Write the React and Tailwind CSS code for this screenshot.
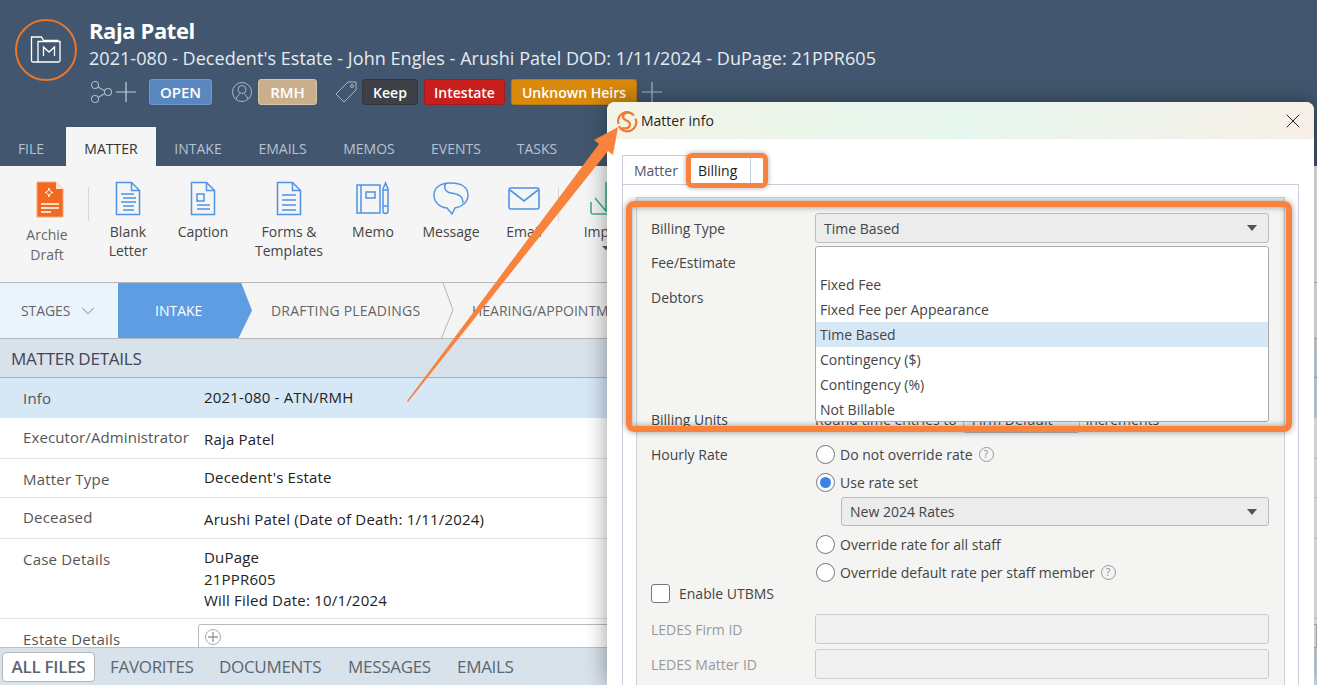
import { ChevronDown, X } from "lucide-react";

const Doc = ({ children }) => (
  <svg width="26" height="35" viewBox="0 0 26 35" fill="none" stroke="#4f94e3" strokeWidth="1.500">
    <path d="M1.500 1.500h15l8 8v24h-23z" />
    <path d="M16.500 1.500v8h8" />
    {children}
  </svg>
);

const Cross = ({ className, color }) => (
  <svg className={className} width="20" height="20" viewBox="0 0 20 20" stroke={color} strokeWidth="1.200"><path d="M10 0v20M0 10h20" /></svg>
);

const RibbonItem = ({ className, icon, label, label2 }) => (
  <div className={`flex flex-col items-center shrink-0 ${className}`}>
    <div className="h-[41px] flex items-start">{icon}</div>
    <div className="text-[14px] leading-[19px] text-[#444] text-center whitespace-nowrap">{label}<br />{label2}</div>
  </div>
);

const Row = ({ label, children, className, labelTop, valueTop }) => (
  <div className={`flex border-b border-[#e3e3e3] ${className}`}>
    <div className={`w-[204px] pl-[23px] text-[#555] shrink-0 whitespace-nowrap ${labelTop}`}>{label}</div>
    <div className={`text-[#222] leading-[21.5px] ${valueTop}`}>{children}</div>
  </div>
);

const Radio = ({ on, children, help }) => (
  <div className="flex items-center h-[28px] text-[#444]">
    <span className="w-[19px] h-[19px] ml-[1px] rounded-full border border-[#777] bg-white flex items-center justify-center shrink-0">
      {on && <span className="w-[11px] h-[11px] rounded-full bg-[#3b82e6]"></span>}
    </span>
    <span className="ml-[5px] whitespace-nowrap">{children}</span>
    {help && <span className="ml-[6px] w-[15px] h-[15px] rounded-full border border-[#999] text-[10px] leading-[13px] text-center text-[#888]">?</span>}
  </div>
);

const Caret = () => <span className="w-0 h-0 border-x-[5px] border-x-transparent border-t-[6px] border-t-[#555]"></span>;

const tabs = [
  ["FILE", "w-[66px] pr-[4px] text-[#b7c2cf]"],
  ["MATTER", "w-[90px] bg-[#f5f5f5] text-[#333]"],
  ["INTAKE", "w-[84px] text-[#b7c2cf]"],
  ["EMAILS", "w-[85px] text-[#b7c2cf]"],
  ["MEMOS", "w-[88px] text-[#b7c2cf]"],
  ["EVENTS", "w-[86px] text-[#b7c2cf]"],
  ["TASKS", "w-[76px] text-[#b7c2cf]"],
];

export default function App() {
  return (
    <div className="relative w-[1317px] h-[685px] overflow-hidden bg-white font-['Open_Sans',sans-serif] text-[14px]">
      {/* header */}
      <div className="h-[127px] bg-[#42576f] flex">
        <div className="ml-[15px] mt-[19px] w-[62px] h-[62px] rounded-full border-2 border-[#e8762b] flex items-center justify-center shrink-0">
          <svg width="32" height="30" viewBox="0 0 32 30" fill="none" stroke="#fff" strokeWidth="1.300">
            <path d="M8 27H3a1.500 1.500 0 0 1-1.500-1.500V2h10l2 3.500h15" />
            <path d="M8 27V6.500h22V25.500a1.500 1.500 0 0 1-1.500 1.500z" />
            <path d="M13.500 21v-9l5.500 5 5.500-5v9" />
          </svg>
        </div>
        <div className="ml-[12px] flex flex-col">
          <div className="mt-[15px] text-[22px] leading-[30px] font-bold text-white tracking-[-0.4px]">Raja Patel</div>
          <div className="text-[18px] leading-[26px] text-[#e6ebf0] whitespace-nowrap tracking-[0.05px]">2021-080 - Decedent's Estate - John Engles - Arushi Patel DOD: 1/11/2024 - DuPage: 21PPR605</div>
          <div className="mt-[8px] h-[26px] flex items-center text-white font-semibold text-[14px] whitespace-nowrap">
            <svg className="ml-[1px]" width="23" height="24" viewBox="0 0 23 24" fill="none" stroke="#a9b6c4" strokeWidth="1.100">
              <circle cx="5" cy="5" r="3.500" /><circle cx="5" cy="19" r="3.500" /><circle cx="18" cy="12" r="3.500" />
              <path d="M8 7l7 4M8 17.500l7-4" />
            </svg>
            <Cross className="ml-[3px]" color="#c6d0da" />
            <span className="ml-[13px] w-[63px] h-[26px] rounded-[3px] bg-[#5b87c0] border border-[#6f98cc] flex items-center justify-center text-[15px]">OPEN</span>
            <svg className="ml-[20px]" width="20" height="22" viewBox="0 0 20 22" fill="none" stroke="#a9b6c4" strokeWidth="1">
              <circle cx="10" cy="11" r="9.500" /><circle cx="10" cy="8.500" r="4" /><path d="M4 18c1-3 3-4.500 4-5M16 18c-1-3-3-4.500-4-5" />
            </svg>
            <span className="ml-[6px] w-[59px] h-[26px] rounded-[3px] bg-[#c9b08c] border border-[#d8c4a6] flex items-center justify-center text-[15px]">RMH</span>
            <svg className="ml-[18px]" width="22" height="24" viewBox="0 0 22 24" fill="none" stroke="#a9b6c4" strokeWidth="1">
              <path d="M13 2h8v8L9 22 1 14z" /><circle cx="17" cy="6" r="1.500" />
            </svg>
            <span className="ml-[5px] w-[56px] h-[26px] rounded-[3px] bg-[#3d4046] border border-[#33363b] flex items-center justify-center">Keep</span>
            <span className="ml-[6px] w-[81px] h-[26px] rounded-[3px] bg-[#c81e1e] border border-[#a81a1a] flex items-center justify-center">Intestate</span>
            <span className="ml-[6px] w-[126px] h-[26px] rounded-[3px] bg-[#d98a0d] border border-[#b97a12] flex items-center justify-center">Unknown Heirs</span>
            <Cross className="ml-[5px]" color="#aab6c3" />
          </div>
        </div>
      </div>

      {/* tabs */}
      <div className="h-[39px] bg-[#42576f] flex">
        {tabs.map(([t, c]) => (
          <div key={t} className={`flex items-center justify-center pt-[3px] text-[14px] ${c}`}>{t}</div>
        ))}
      </div>

      {/* ribbon */}
      <div className="h-[117px] bg-[#f5f5f5] border-b border-[#b8b8b8] flex pt-[15px]">
        <div className="ml-[18px] w-[58px] shrink-0 flex flex-col items-center">
          <svg className="ml-[5px] h-[37px]" width="28" height="37" viewBox="0 0 28 37">
            <path d="M1 1h19l7 7v28H1z" fill="#f26a21" stroke="#f8a878" />
            <path d="M20 1v7h7z" fill="#fde3d1" />
            <path d="M13 7c.5 3 1.500 4 4 4.500-2.500.5-3.500 1.500-4 4.500-.5-3-1.500-4-4-4.500 2.500-.5 3.500-1.500 4-4.500z" fill="none" stroke="#fff" />
            <path d="M5 23h18M5 27h18M5 31h10" stroke="#fff" strokeWidth="1.300" />
          </svg>
          <div className="mt-[7px] text-[14px] leading-[20px] text-[#666] text-center">Archie<br />Draft</div>
        </div>
        <div className="ml-[12px] mt-[6px] w-px h-[34px] bg-[#d8d8d8] shrink-0"></div>
        <RibbonItem className="ml-[15px] w-[48px]" label="Blank" label2="Letter" icon={<Doc><path d="M6 13h13M8 17h13M6 21h15M8 25h11M8 29h11" /></Doc>} />
        <RibbonItem className="ml-[20px] w-[62px]" label="Caption" icon={<Doc><path d="M7 13h7v7H7zM7 24h13M7 28h13" /></Doc>} />
        <RibbonItem className="ml-[16px] w-[78px]" label="Forms &" label2="Templates" icon={<Doc><path d="M6 14h14M6 19h14M6 24h14M6 29h14" /></Doc>} />
        <RibbonItem className="ml-[17px] w-[56px]" label="Memo" icon={
          <svg width="34" height="35" viewBox="0 0 34 35" fill="none" stroke="#4f94e3" strokeWidth="1.500">
            <path d="M1 4h23v28H1zM5 4v28M10 11h9v6h-9zM27 30a2.500 2.500 0 0 0 5 0V8l-2.500-6L27 8zM27 25h5M27 9h5" />
          </svg>
        } />
        <RibbonItem className="ml-[19px] w-[62px]" label="Message" icon={
          <svg width="36" height="35" viewBox="0 0 36 35" fill="none" stroke="#4f94e3" strokeWidth="1.400">
            <path d="M14 27C6 26 1 21 1 14 1 6 8 2 18 2s17 4 17 12c0 7-6 12-13 13l-3 6z" />
            <path d="M13 2c-3 4-1 9 5 10 6 1 12 2 12 10" />
          </svg>
        } />
        <RibbonItem className="ml-[18px] w-[48px]" label="Email" icon={
          <svg width="32" height="35" viewBox="0 0 32 35" fill="none" stroke="#4f94e3" strokeWidth="1.600">
            <rect x="1" y="7" width="30" height="21" rx="2" /><path d="M2 9l14 11L30 9" />
          </svg>
        } />
        <div className="ml-[10px] mt-[6px] w-px h-[34px] bg-[#d8d8d8] shrink-0"></div>
        <div className="ml-[22px] w-[50px] shrink-0 flex flex-col items-center">
          <div className="h-[41px]">
            <svg width="32" height="35" viewBox="0 0 32 35" fill="none" stroke="#36b58e" strokeWidth="1.600">
              <path d="M1 21v10a2 2 0 0 0 2 2h26a2 2 0 0 0 2-2V21M16 1v30M5 17l11 13 11-13" />
            </svg>
          </div>
          <div className="text-[14px] leading-[19px] text-[#444]">Import</div>
          <div className="mt-[5px] w-0 h-0 border-x-[4px] border-x-transparent border-t-[4px] border-t-[#555]"></div>
        </div>
      </div>

      {/* stages */}
      <div className="h-[56px] bg-[#f4f4f4] border-b border-[#b8b8b8] flex items-stretch text-[14px] text-[#666] whitespace-nowrap">
        <div className="w-[118px] bg-[#eaf4fd] flex items-center pl-[21px] shrink-0 tracking-[-0.1px]">
          STAGES <ChevronDown className="ml-[7px] text-[#6c7c8c]" size={22} strokeWidth={1} />
        </div>
        <div className="w-[134px] bg-[#5f9de3] text-white flex items-center pl-[37px] shrink-0 [clip-path:polygon(0_0,92%_0,100%_50%,90%_100%,0_100%)]">INTAKE</div>
        <div className="w-[188px] flex items-center pl-[19px] shrink-0 tracking-[0.2px]">DRAFTING PLEADINGS</div>
        <svg className="shrink-0" width="14" height="56" viewBox="0 0 14 56" fill="none" stroke="#b5b5b5"><path d="M3 0l10 27L1 56" /></svg>
        <div className="flex items-center pl-[18px]">HEARING/APPOINTMENT</div>
      </div>

      {/* matter details */}
      <div className="h-[39px] bg-[#d8e2eb] border-b border-[#b0b0b0] flex items-center pl-[11px] pt-[1px] text-[17px] text-[#445] tracking-[-0.25px]">MATTER DETAILS</div>
      <div className="text-[15px] tracking-[0.2px]">
        <div className="h-[40px] flex bg-[#d6e7f6]">
          <div className="w-[204px] pl-[23px] pt-[9px] text-[#555] shrink-0">Info</div>
          <div className="pt-[8px] text-[#222]">2021-080 - ATN/RMH</div>
        </div>
        <Row label="Executor/Administrator" className="h-[41px]" labelTop="pt-[8px] tracking-[0.1px]" valueTop="pt-[11px]">Raja Patel</Row>
        <Row label="Matter Type" className="h-[39px]" labelTop="pt-[9px]" valueTop="pt-[8px]">Decedent's Estate</Row>
        <Row label="Deceased" className="h-[41px]" labelTop="pt-[8px]" valueTop="pt-[11px]">Arushi Patel (Date of Death: 1/11/2024)</Row>
        <Row label="Case Details" className="h-[80px]" labelTop="pt-[9px]" valueTop="pt-[8px]">DuPage<br />21PPR605<br />Will Filed Date: 10/1/2024</Row>
        <div className="h-[28px] flex overflow-hidden">
          <div className="w-[198px] pl-[23px] pt-[12px] leading-[16px] text-[#555] shrink-0">Estate Details</div>
          <div className="flex-1 mt-[5px] h-[40px] border border-[#bbb] rounded-tl-[3px] pl-[6px] pt-[4px]">
            <span className="flex items-center justify-center w-[16px] h-[16px] rounded-full border border-[#aaa]">
              <svg width="10" height="10" viewBox="0 0 10 10" stroke="#999" strokeWidth="1.400"><path d="M5 0v10M0 5h10" /></svg>
            </span>
          </div>
        </div>
      </div>

      {/* bottom tabs */}
      <div className="h-[38px] bg-[#d8e2eb] border-t border-[#b8c2cc] flex items-center text-[17px] text-[#5a6672] tracking-[-0.3px] whitespace-nowrap">
        <div className="ml-[2px] w-[93px] h-[30px] bg-white border border-[#b5b5b5] rounded-[4px] flex items-center justify-center font-semibold">ALL FILES</div>
        <span className="ml-[15px] w-[84px]">FAVORITES</span>
        <span className="ml-[25px] w-[104px]">DOCUMENTS</span>
        <span className="ml-[25px] w-[84px]">MESSAGES</span>
        <span className="ml-[25px]">EMAILS</span>
      </div>

      {/* Matter info dialog */}
      <div className="absolute left-[607px] top-[102px] w-[707px] h-[583px] bg-white rounded-t-[8px] overflow-hidden shadow-[0_0_22px_rgba(0,0,0,0.4)]">
        <div className="h-[37px] bg-gradient-to-r from-[#f3f4e6] via-[#e6f6ee] to-[#f6efe7] flex items-center pl-[34px] pr-[9px] text-[14px] text-[#222]">
          <span className="flex-1">Matter info</span>
          <X size={24} strokeWidth={1} className="text-[#222]" />
        </div>
        <div className="ml-[15px] mt-[16px] w-[677px] h-[530px] text-[14px]">
          <div className="h-[30px] flex items-center border-b border-[#c5d0dc]">
            <div className="w-[129px] h-[30px] border-l border-t border-r border-[#c5d0dc] flex items-center whitespace-nowrap">
              <span className="ml-[11px] text-[#556]">Matter</span>
              <span className="ml-[20px] text-[#222]">Billing</span>
            </div>
          </div>
          <div className="h-[500px] border-l border-r border-[#c5d0dc] pl-[13px] pr-[13px] pt-[12px]">
            <div className="h-[490px] bg-[#f4f4f3] border border-[#cfcfcf] pl-[14px] pr-[15px] text-[#444]">
              <div className="relative">
                <div className="flex items-center h-[30px] mt-[15px]">
                  <span className="w-[164px] shrink-0">Billing Type</span>
                  <div className="flex-1 h-[30px] bg-[#ececec] border border-[#bbb] rounded-[3px] flex items-center justify-between px-[8px] pr-[11px]">Time Based <Caret /></div>
                </div>
                <div className="h-[35px] mt-[2px] flex items-center">Fee/Estimate</div>
                <div className="h-[122px] pt-[7px]">Debtors</div>
                <div className="flex items-center h-[34px] whitespace-nowrap">
                  <span className="w-[164px] shrink-0">Billing Units</span>
                  <span>Round time entries to</span>
                  <span className="ml-[6px] w-[117px] h-[28px] border border-[#bbb] bg-[#ececec] rounded-[3px] flex items-center pl-[8px]">Firm Default</span>
                  <span className="ml-[6px]">increments</span>
                </div>
                {/* open dropdown list */}
                <div className="absolute left-[164px] top-[33px] right-0 h-[176px] bg-white border border-[#aaa] rounded-[3px] text-[#444]">
                  <div className="h-[25px]"></div>
                  <div className="h-[25px] pl-[4px] flex items-center">Fixed Fee</div>
                  <div className="h-[25px] pl-[4px] flex items-center">Fixed Fee per Appearance</div>
                  <div className="h-[25px] pl-[4px] flex items-center bg-[#d6e7f6]">Time Based</div>
                  <div className="h-[25px] pl-[4px] flex items-center">Contingency ($)</div>
                  <div className="h-[25px] pl-[4px] flex items-center">Contingency (%)</div>
                  <div className="h-[25px] pl-[4px] flex items-center">Not Billable</div>
                </div>
              </div>
              <div className="flex mt-[4px]">
                <span className="w-[164px] shrink-0 pt-[4px]">Hourly Rate</span>
                <div className="flex-1">
                  <Radio help>Do not override rate</Radio>
                  <Radio on>Use rate set</Radio>
                  <div className="ml-[26px] mt-[1px] mb-[4px] h-[29px] bg-[#ececec] border border-[#bbb] rounded-[3px] flex items-center justify-between pl-[8px] pr-[11px]">New 2024 Rates <Caret /></div>
                  <Radio>Override rate for all staff</Radio>
                  <Radio help>Override default rate per staff member</Radio>
                </div>
              </div>
              <div className="flex items-center h-[20px] mt-[-3px]">
                <span className="w-[19px] h-[19px] rounded-[3px] border border-[#777] bg-white"></span>
                <span className="ml-[9px]">Enable UTBMS</span>
              </div>
              <div className="flex items-center h-[30px] mt-[11px] text-[#999]">
                <span className="w-[164px] shrink-0">LEDES Firm ID</span>
                <div className="flex-1 h-[30px] bg-[#f0f0f0] border border-[#ccc] rounded-[3px]"></div>
              </div>
              <div className="flex items-center h-[30px] mt-[5px] text-[#999]">
                <span className="w-[164px] shrink-0">LEDES Matter ID</span>
                <div className="flex-1 h-[30px] bg-[#f0f0f0] border border-[#ccc] rounded-[3px]"></div>
              </div>
            </div>
          </div>
        </div>
      </div>

      {/* annotations over the screenshot */}
      <div className="absolute left-[686px] top-[153px] w-[82px] h-[35px] border-[5px] border-[#f9823d] rounded-[6px] shadow-[0_0_5px_rgba(0,0,0,0.35)]"></div>
      <div className="absolute left-[626px] top-[201px] w-[666px] h-[231px] border-[6px] border-[#f9823d] rounded-[8px] shadow-[0_0_6px_rgba(0,0,0,0.4),inset_0_0_6px_rgba(0,0,0,0.4)]"></div>
      <svg className="absolute left-0 top-0 pointer-events-none" width="1317" height="685" fill="none">
        <g stroke="#ee7a30" strokeWidth="2.200">
          <path d="M634 115.500A9 9 0 0 0 618.500 124" />
          <path d="M619 126A9 9 0 0 0 635.500 118.500" />
          <path d="M631 113C622 111 621 118 626.500 120.500C632 123 631 130 622 128" />
        </g>
        <path d="M407 401L599 144L594 140L618 127L613 155L608 151L408 402z" fill="#f9823d" />
      </svg>
    </div>
  );
}
